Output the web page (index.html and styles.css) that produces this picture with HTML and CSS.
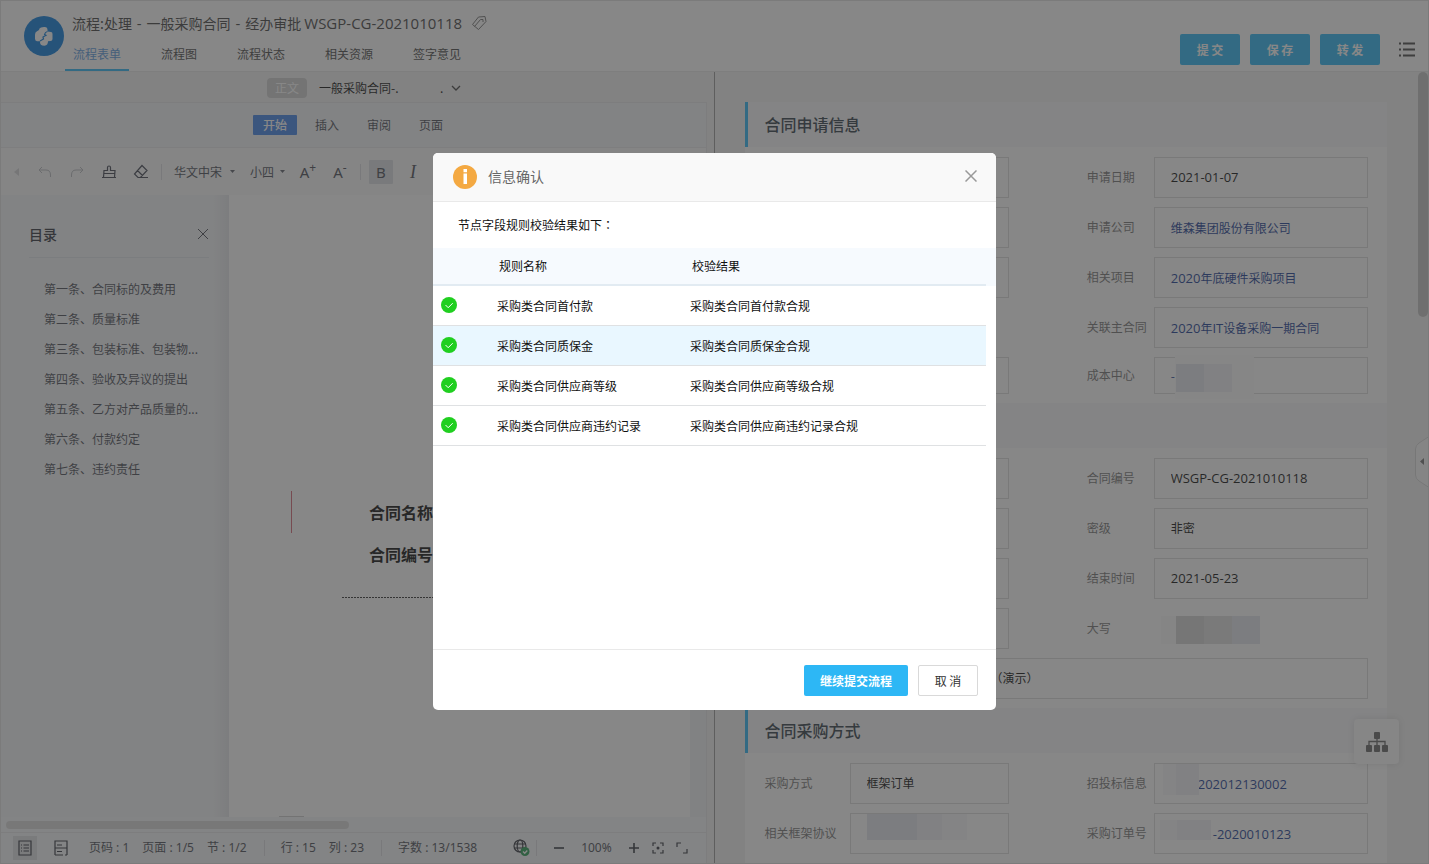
FILE: index.html
```html
<!DOCTYPE html>
<html lang="zh-CN">
<head>
<meta charset="utf-8">
<title>流程:处理</title>
<link rel="stylesheet" href="styles.css">
</head>
<body>
<div class="app">
  <header class="topbar">
    <svg class="logo" viewBox="0 0 40 40"><circle cx="20" cy="20" r="20" fill="#0d7ddd"/><path fill="#fff" d="M15 14q0-2 2-2.500l3-.500q3.500-.500 3.500 3v1.500l3.500.500q1.500.200 1.500 2v5q0 2-2 2l-2.500.200q0 4-3.500 4.500-5 0-4.500-4.500h-3q-2-.200-2-2.500v-4q0-3 2-3.500z"/><path fill="none" stroke="#0d7ddd" stroke-width="1.200" d="M23.500 15.500q-2.500.500-3 3l1.500.800-3 1.700.5 2-3.500 2"/></svg>
    <div class="heading">
      <h1 class="title"><span>流程:处理<span class="title-sep"> - </span>一般采购合同<span class="title-sep"> - </span>经办审批 <span class="title-code">WSGP-CG-2021010118</span></span>
        <svg class="tag" viewBox="0 0 16 16" fill="none" stroke="#777"><path d="M1.500 9.500l6-7.500 6.500-.5 1 5-7.500 8z"/><path d="M9.500 4.500h2.500v2.500M3.500 11.500l6-7"/></svg>
      </h1>
      <nav class="tabs">
        <a class="tab tab-on" href="#">流程表单</a>
        <a class="tab" href="#">流程图</a>
        <a class="tab" href="#">流程状态</a>
        <a class="tab" href="#">相关资源</a>
        <a class="tab" href="#">签字意见</a>
      </nav>
    </div>
    <div class="actions">
      <button class="btn-top">提 交</button>
      <button class="btn-top">保 存</button>
      <button class="btn-top">转 发</button>
      <button class="btn-menu"><svg width="16" height="15" viewBox="0 0 16 15" stroke="#4a4a4a" stroke-width="2"><path d="M0 1.500h2M4 1.500h12M0 7.500h2M4 7.500h12M0 13.500h2M4 13.500h12"/></svg></button>
    </div>
  </header>

  <main class="panes">
    <section class="left">
      <div class="docbar">
        <span class="chip">正文</span>
        <span class="docname">一般采购合同-.</span>
        <span class="docdot">.</span>
        <svg width="10" height="6" viewBox="0 0 10 6" fill="none" stroke="#444" stroke-width="1.300"><path d="M1 1l4 4 4-4"/></svg>
      </div>
      <div class="editor">
        <div class="ribbon">
          <button class="rib rib-on">开始</button>
          <button class="rib">插入</button>
          <button class="rib">审阅</button>
          <button class="rib">页面</button>
        </div>
        <div class="tools">
          <svg class="back" viewBox="0 0 5 8"><path d="M5 0v8L0 4z" fill="#d5d5d8"/></svg>
          <button class="tool"><svg viewBox="0 0 16 16" fill="none" stroke="#b9bbc0"><path d="M5 3L2 6l3 3M2 6h7q4.500 0 4.500 5v2"/></svg></button>
          <button class="tool"><svg viewBox="0 0 16 16" fill="none" stroke="#b9bbc0"><path d="M11 3l3 3-3 3M14 6H7q-4.500 0-4.500 5v2"/></svg></button>
          <button class="tool"><svg viewBox="0 0 16 16" fill="none" stroke="#444854" stroke-width="1.200"><path d="M2.500 13.500L3 6.500h3.500V3.500q0-1.500 1.500-1.500t1.500 1.500v3H14l-.5 7M1 13.500h14M3 9.500h10.500"/></svg></button>
          <button class="tool"><svg viewBox="0 0 16 16" fill="none" stroke="#444854" stroke-width="1.200"><path d="M9 1.500l5 5-6.500 7H5L1.500 10zM4.500 6.500l5 5M5 13.500h10"/></svg></button>
          <i class="rule"></i>
          <label class="pick pick-font"><select aria-label="字体"><option>华文中宋</option></select><svg viewBox="0 0 5 3"><path d="M0 0h5L2.500 3z" fill="#60636c"/></svg></label>
          <label class="pick pick-size"><select aria-label="字号"><option>小四</option></select><svg viewBox="0 0 5 3"><path d="M0 0h5L2.500 3z" fill="#60636c"/></svg></label>
          <button class="tool glyph">A<sup>+</sup></button>
          <button class="tool glyph">A<sup>-</sup></button>
          <i class="rule"></i>
          <button class="tool glyph glyph-b"><span>B</span></button>
          <button class="tool glyph glyph-i">I</button>
        </div>
        <div class="work">
          <aside class="outline">
            <div class="outline-head"><h2>目录</h2><button class="plain"><svg width="12" height="12" viewBox="0 0 12 12" stroke="#4c4f58"><path d="M1 1l10 10M11 1L1 11"/></svg></button></div>
            <ol class="toc">
              <li>第一条、合同标的及费用</li>
              <li>第二条、质量标准</li>
              <li>第三条、包装标准、包装物...</li>
              <li>第四条、验收及异议的提出</li>
              <li>第五条、乙方对产品质量的...</li>
              <li>第六条、付款约定</li>
              <li>第七条、违约责任</li>
            </ol>
          </aside>
          <article class="paper">
            <div class="doclines">
              <p><span>合同名称</span></p>
              <p><span>合同编号</span></p>
            </div>
            <hr class="dots">
            <i class="pagefoot"></i>
          </article>
        </div>
        <div class="hscroll"><i></i></div>
        <footer class="status">
          <button class="view view-on"><svg viewBox="0 0 14 16" fill="none" stroke="#33363f" stroke-width="1.200"><path d="M1 1h12v14H1zM3 5h1M5.500 5H11M3 8h1M5.500 8H11M3 11h1M5.500 11H11"/></svg></button>
          <button class="view"><svg viewBox="0 0 14 16" fill="none" stroke="#33363f" stroke-width="1.200"><path d="M1 15V1h12v14M1 8h12M3 5h5M3 11.500h5M1 15h8M11 15h2"/></svg></button>
          <span class="st st-first">页码 : 1</span>
          <span class="st">页面 : 1/5</span>
          <span class="st">节 : 1/2</span>
          <i class="rule"></i>
          <span class="st">行 : 15</span>
          <span class="st">列 : 23</span>
          <i class="rule"></i>
          <span class="st st-count">字数 : 13/1538</span>
          <svg class="globe" viewBox="0 0 18 18" fill="none"><g stroke="#33363f" stroke-width="1.200"><circle cx="7" cy="7" r="6"/><ellipse cx="7" cy="7" rx="2.800" ry="6"/><path d="M1 5h12M1 9h12"/></g><circle cx="12" cy="12.500" r="4.500" fill="#2a9e55"/><path d="M10 12.500l1.700 1.700 2.600-2.800" stroke="#fff" stroke-width="1.400"/></svg>
          <i class="rule rule-tight"></i>
          <button class="zoom"><svg viewBox="0 0 12 12" stroke="#33363f" stroke-width="1.600"><path d="M1 6h10"/></svg></button>
          <span class="pct">100%</span>
          <button class="zoom"><svg viewBox="0 0 12 12" stroke="#33363f" stroke-width="1.600"><path d="M1 6h10M6 1v10"/></svg></button>
          <button class="zoom"><svg viewBox="0 0 12 12" fill="none" stroke="#33363f" stroke-width="1.200"><path d="M1 4V1h3M8 1h3v3M11 8v3H8M4 11H1V8"/><circle cx="6" cy="6" r="1.500" fill="#33363f" stroke="none"/></svg></button>
          <button class="zoom"><svg viewBox="0 0 12 12" fill="none" stroke="#33363f" stroke-width="1.200"><path d="M1 5V1h4M11 7v4H7"/></svg></button>
        </footer>
      </div>
    </section>

    <section class="right">
      <div class="form">
        <h2 class="sec">合同申请信息</h2>
        <div class="rows">
          <div class="row"><span></span><div class="box"></div><label class="lb" for="f1">申请日期</label><input class="box num" id="f1" value="2021-01-07" readonly></div>
          <div class="row"><span></span><div class="box"></div><span class="lb">申请公司</span><div class="box"><a href="#">维森集团股份有限公司</a></div></div>
          <div class="row"><span></span><div class="box"></div><span class="lb">相关项目</span><div class="box"><a href="#"><span class="num">2020</span>年底硬件采购项目</a></div></div>
          <div class="row"><span></span><span></span><span class="lb">关联主合同</span><div class="box"><a href="#"><span class="num">2020</span>年<span class="num">IT</span>设备采购一期合同</a></div></div>
          <div class="row row-short"><span></span><div class="box"></div><span class="lb">成本中心</span><div class="box"><a href="#">-</a><span class="veil veil-cost"><i class="m3"></i><i class="m2"></i></span></div></div>
        </div>
        <div class="sec"></div>
        <div class="rows">
          <div class="row"><span></span><div class="box"></div><label class="lb" for="f2">合同编号</label><input class="box num" id="f2" value="WSGP-CG-2021010118" readonly></div>
          <div class="row"><span></span><div class="box"></div><label class="lb" for="f3">密级</label><input class="box" id="f3" value="非密" readonly></div>
          <div class="row"><span></span><div class="box"></div><label class="lb" for="f4">结束时间</label><input class="box num" id="f4" value="2021-05-23" readonly></div>
          <div class="row"><span></span><div class="box"></div><span class="lb">大写</span><div class="bare"><span class="veil veil-sum"><i class="m0"></i><i class="m5"></i><i class="m4"></i><i class="m3"></i></span></div></div>
          <div class="row row-wide"><span></span><input class="box tail" aria-label="合同名称" value="（演示）" readonly></div>
        </div>
        <h2 class="sec">合同采购方式</h2>
        <div class="rows">
          <div class="row"><label class="lb" for="f5">采购方式</label><input class="box" id="f5" value="框架订单" readonly><span class="lb">招投标信息</span><div class="box after-bid"><a class="num" href="#">202012130002</a><span class="veil veil-bid"><i class="m1"></i><i class="m2"></i></span></div></div>
          <div class="row"><span class="lb">相关框架协议</span><div class="box"><span class="veil veil-frame"><i class="m3"></i><i class="m3"></i><i class="m2"></i><i class="m1"></i></span></div><span class="lb">采购订单号</span><div class="box after-po"><a class="num" href="#">-2020010123</a><span class="veil veil-po"><i class="m1"></i><i class="m2"></i><i class="m2"></i></span></div></div>
        </div>
      </div>
      <i class="vscroll"></i>
      <button class="float"><svg width="22" height="20" viewBox="0 0 22 20"><path d="M11 6v8M3 14V9.500h16V14" fill="none" stroke="#666" stroke-width="1.300"/><g fill="#666"><rect x="8" width="6" height="7" rx="1"/><rect y="13" width="6" height="7" rx="1"/><rect x="8" y="13" width="6" height="7" rx="1"/><rect x="16" y="13" width="6" height="7" rx="1"/></g></svg></button>
      <button class="drawer"><svg width="13" height="52" viewBox="0 0 13 52"><path d="M14 .500L4 7Q.500 9.500.500 13v26q0 3.500 3.500 6l10 6.500" fill="#fafafa" stroke="#d8d8d8"/><path d="M9 22v7l-4-3.500z" fill="#777"/></svg></button>
    </section>
  </main>
</div>

<div class="mask">
  <div class="modal" role="dialog">
    <div class="m-head">
      <svg width="24" height="24" viewBox="0 0 24 24"><circle cx="12" cy="12" r="12" fill="#f4a942"/><path d="M10.500 4h3.500v3.200h-3.500zM10.500 8.500h3.500v10.500h-3.500z" fill="#fff"/></svg>
      <h2>信息确认</h2>
      <button class="plain"><svg width="12" height="12" viewBox="0 0 12 12" stroke="#999" stroke-width="1.500"><path d="M.500.500l11 11M11.500.500l-11 11"/></svg></button>
    </div>
    <div class="m-body">
      <p class="intro">节点字段规则校验结果如下<span lang="zh-TW" class="colon">：</span></p>
      <div class="tablewrap">
        <table class="rules">
          <thead><tr><th class="c-ico"></th><th class="c-name">规则名称</th><th>校验结果</th></tr></thead>
          <tbody>
            <tr><td><svg class="ok" viewBox="0 0 16 16"><circle cx="8" cy="8" r="8" fill="#20cf20"/><path d="M4.500 8l2.700 2.700 4.500-4.500" fill="none" stroke="#fff"/></svg></td><td>采购类合同首付款</td><td>采购类合同首付款合规</td></tr>
            <tr class="hot"><td><svg class="ok" viewBox="0 0 16 16"><circle cx="8" cy="8" r="8" fill="#20cf20"/><path d="M4.500 8l2.700 2.700 4.500-4.500" fill="none" stroke="#fff"/></svg></td><td>采购类合同质保金</td><td>采购类合同质保金合规</td></tr>
            <tr><td><svg class="ok" viewBox="0 0 16 16"><circle cx="8" cy="8" r="8" fill="#20cf20"/><path d="M4.500 8l2.700 2.700 4.500-4.500" fill="none" stroke="#fff"/></svg></td><td>采购类合同供应商等级</td><td>采购类合同供应商等级合规</td></tr>
            <tr><td><svg class="ok" viewBox="0 0 16 16"><circle cx="8" cy="8" r="8" fill="#20cf20"/><path d="M4.500 8l2.700 2.700 4.500-4.500" fill="none" stroke="#fff"/></svg></td><td>采购类合同供应商违约记录</td><td>采购类合同供应商违约记录合规</td></tr>
          </tbody>
        </table>
      </div>
    </div>
    <div class="m-foot">
      <button class="go">继续提交流程</button>
      <button class="cancel">取 消</button>
    </div>
  </div>
</div>
</body>
</html>
```

FILE: styles.css
```css
* { box-sizing: border-box; margin: 0; padding: 0; }
body { font: 12px/18px "Noto Sans CJK SC", "Noto Sans", sans-serif; color: #111; }
button, input, select { font: inherit; color: inherit; background: none; border: 0; appearance: none; outline: none; }
button { cursor: pointer; }
a { text-decoration: none; color: inherit; }
svg { display: block; flex: none; }
i { display: block; flex: none; }
.plain { display: flex; }
.num { font-family: "Open Sans", "Noto Sans CJK SC", sans-serif; font-size: 13px; }

.app { height: 100vh; display: flex; flex-direction: column; overflow: hidden; border: 1px solid #e2e2e2; background: #f3f3f3; }

/* top bar */
.topbar { flex: none; display: flex; height: 71px; padding-left: 23px; background: #fff; border-bottom: 1px solid #e9e9e9; }
.logo { width: 40px; height: 40px; margin-top: 15px; }
.heading { display: flex; flex-direction: column; justify-content: space-between; padding-top: 12px; }
.title { display: flex; align-items: center; gap: 9px; margin-left: 8px; font-size: 14px; line-height: 20px; font-weight: 400; color: #444; }
.title-code, .title-sep { font-family: "Open Sans", sans-serif; font-size: 15px; }
.title-sep { margin: 0 1px; white-space: pre; }
.tag { width: 16px; height: 16px; }
.tabs { display: flex; gap: 24px; }
.tab { height: 28px; padding: 0 8px; line-height: 22px; color: #4a4a4a; border-bottom: 2px solid transparent; }
.tab-on { color: #5b9bdf; border-color: #2db7f5; }
.tabs { padding-left: 1px; }
.actions { margin-left: auto; padding: 0 13px 6px 0; display: flex; align-items: flex-end; gap: 10px; }
.btn-top { width: 60px; height: 31px; border-radius: 2px; background: #2db7f5; color: #fff; font-weight: 700; }
.btn-menu { display: flex; align-items: center; height: 31px; margin-left: 9px; }

.panes { flex: 1; min-height: 0; display: grid; grid-template: minmax(0, 1fr) / minmax(0, 1fr) minmax(0, 1fr); }

/* document editor */
.left { display: flex; flex-direction: column; padding-right: 7px; border-right: 1px solid #999; }
.docbar { flex: none; height: 30px; display: flex; align-items: center; padding: 2px 0 0 266px; }
.chip { padding: 0 8px; line-height: 20px; background: #cfcfcf; color: #fff; border-radius: 4px; margin-right: 12px; }
.docname { width: 121px; }
.docdot { width: 11px; }
.editor { flex: 1; min-height: 0; display: flex; flex-direction: column; border: 1px solid #e6e6e8; border-width: 1px 1px 0 0; background: #f5f7f9; color: #4c4f58; }
.ribbon { flex: none; height: 45px; display: flex; align-items: center; gap: 8px; padding-left: 252px; border-bottom: 1px solid #e8e9eb; background: #f3f5f7; }
.rib { width: 44px; height: 20px; line-height: 18px; }
.rib-on { background: #4285e8; color: #fff; border-radius: 1px; font-weight: 500; }
.tools { flex: none; height: 47px; display: flex; align-items: center; background: #f9fafb; }
.back { width: 5px; height: 8px; margin: 0 10px 0 13px; }
.tool { flex: none; width: 32px; height: 24px; display: flex; align-items: center; justify-content: center; }
.tool svg { width: 16px; height: 16px; }
.rule { width: 1px; height: 16px; background: #dcdde0; margin: 0 4px; }
.pick { display: flex; align-items: center; }
.pick svg { width: 5px; height: 3px; }
.pick-font { margin-left: 8px; }
.pick-font select { width: 56px; }
.pick-size { margin: 0 7px 0 15px; }
.pick-size select { width: 30px; }
.glyph { font-size: 15px; font-family: "Noto Sans", sans-serif; }
.glyph sup { font-size: 12px; line-height: 16px; align-self: flex-start; }
.glyph-b span { width: 24px; height: 24px; line-height: 24px; background: #dcdfe3; border-radius: 1px; }
.glyph-i { font-family: "Liberation Serif", serif; font-style: italic; font-size: 18px; }
.work { flex: 1; min-height: 0; display: flex; padding-right: 16px; background: #f1f3f6; }
.outline { flex: none; width: 228px; padding: 27px 20px 0 28px; background: linear-gradient(to right, #f3f5f7 212px, #e4e6ea); }
.outline-head { display: flex; align-items: center; justify-content: space-between; height: 36px; padding-bottom: 12px; border-bottom: 1px solid #e2e5ec; }
.outline-head h2 { font-size: 14px; font-weight: 500; color: #33363f; }
.toc { list-style: none; padding: 16px 0 0 15px; line-height: 30px; white-space: nowrap; }
.paper { flex: 1; min-width: 0; position: relative; background: #fff; padding: 296px 0 0 62px; }
.doclines { border-left: 1px solid #d86a78; height: 42px; padding-left: 77px; color: #111; }
.doclines p { font-size: 16px; line-height: 42px; font-weight: 700; }
.doclines span { border-right: 2px solid #c9d6ee; }
.dots { border: 0; height: 1px; background: repeating-linear-gradient(to right, #333 0 2px, #fff 2px 3px); margin: 64px 60px 0 51px; }
.pagefoot { position: absolute; left: 50px; bottom: 0; width: 25px; height: 1px; background: #ccc; }
.hscroll { flex: none; height: 15px; padding: 4px 0 0 5px; }
.hscroll i { width: 49%; height: 8px; border-radius: 4px; background: #dadada; }
.status { flex: none; height: 31px; display: flex; align-items: center; padding-left: 12px; border-top: 1px solid #e6e6e8; font-family: "Noto Sans", "Noto Sans CJK SC", sans-serif; white-space: nowrap; }
.status > * { flex: none; }
.view { width: 24px; height: 24px; display: flex; align-items: center; justify-content: center; margin-right: 12px; }
.view svg { width: 14px; height: 16px; }
.view-on { background: #dfe1e4; }
.st { margin-right: 13px; }
.st-first { margin-left: 4px; }
.status .rule { margin: 0 16px 0 4px; }
.status .st-count { margin-right: 36px; }
.globe { width: 18px; height: 18px; }
.status .rule-tight { margin: 0 16px 0 5px; }
.zoom { width: 12px; height: 12px; margin-right: 12px; }
.zoom svg { width: 12px; height: 12px; }
.pct { margin: 0 16px 0 4px; }

/* contract form */
.right { position: relative; overflow: hidden; padding: 30px 41px 0 30px; }
.form { min-height: 100%; background: #fff; }
.sec { height: 45px; line-height: 45px; padding-left: 17px; border-left: 3px solid #2db7f5; background: #f8f8fb; font-size: 16px; font-weight: 500; color: #333f4a; }
.rows { display: flex; flex-direction: column; gap: 9px; padding: 10px 19px 9px 20px; }
.row { display: grid; grid-template-columns: 85px minmax(0, 159fr) 78px 67px minmax(0, 214fr); height: 41px; }
.row > :nth-child(3) { grid-column: 4; }
.row > :nth-child(4) { grid-column: 5; }
.row-short { height: 37px; }
.row-wide { grid-template-columns: 85px minmax(0, 1fr); }
.lb { align-self: center; padding-bottom: 2px; color: #777; white-space: nowrap; }
.box { position: relative; width: 100%; min-width: 0; border: 1px solid #dcdcdc; padding: 0 16px; display: flex; align-items: center; white-space: nowrap; }
input.box { padding-bottom: 2px; }
.box a { color: #1c3f96; }
.bare { position: relative; }
.row .tail { padding-left: 140px; }
.row .after-bid { padding-left: 43px; }
.row .after-po { padding-left: 58px; }
.veil { position: absolute; display: flex; background: #fdfdfd; }
.veil i { width: 28px; height: 100%; }
.veil-cost { left: 20px; top: -3px; width: 79px; height: 44px; padding: 9px 1px 7px; }
.veil-sum { left: 7px; top: 8px; height: 28px; }
.veil-sum .m0 { width: 15px; }
.veil-bid { left: 8px; top: 0; height: 31px; }
.veil-bid .m1 { width: 13px; }
.veil-bid .m2 { width: 23px; }
.veil-po { left: 5px; top: 6px; height: 20px; }
.veil-po i { width: 17px; }
.veil-frame { left: 16px; top: 0; height: 26px; }
.veil-frame i { width: 25px; }
.m0 { background: #fafafa; }
.m1 { background: #f7f8fb; }
.m2 { background: #eff1f5; }
.m3 { background: #e4e7ee; }
.m4 { background: #dedede; }
.m5 { background: #d4d4d4; }
.vscroll { position: absolute; right: 0; top: 0; width: 10px; height: 245px; border-radius: 5px; background: #c4c4c4; }
.float { position: absolute; right: 29px; bottom: 99px; width: 45px; height: 45px; border-radius: 4px; background: #fcfcfc; box-shadow: 0 0 8px rgba(0,0,0,.12); display: flex; align-items: center; justify-content: center; }
.drawer { position: absolute; right: 0; bottom: 375px; }

/* dialog */
.mask { position: fixed; inset: 0; display: flex; align-items: center; justify-content: center; padding-bottom: 1px; background: rgba(55,55,55,.6); }
.modal { width: 563px; border-radius: 5px; background: #fff; overflow: hidden; }
.m-head { display: flex; align-items: center; height: 49px; padding: 0 19px 0 20px; background: #f9f9f9; border-bottom: 1px solid #e9e9e9; }
.m-head h2 { flex: 1; margin-left: 11px; font-size: 14px; font-weight: 400; color: #666; }
.m-head .plain, .m-head h2 { padding-bottom: 2px; }
.m-body { min-height: 447px; }
.intro { height: 46px; line-height: 46px; padding-left: 25px; }
.colon { font-family: "Noto Sans CJK TC", sans-serif; }
.tablewrap { padding-right: 10px; background: linear-gradient(#f6fafe 38px, #fff 38px); }
.rules { width: 100%; border-collapse: separate; border-spacing: 0; table-layout: fixed; }
.rules th { height: 38px; padding: 0 10px; text-align: left; font-weight: 400; border-bottom: 2px solid #e2ebf2; }
.rules td { height: 40px; padding: 0 8px; border-bottom: 1px solid #dfe1e3; }
.rules .c-ico { width: 56px; }
.rules .c-name { width: 193px; }
.hot td { background: #e9f7ff; }
.ok { width: 16px; height: 16px; margin-bottom: 2px; }
.m-foot { display: flex; justify-content: flex-end; gap: 10px; padding: 15px 18px 14px; border-top: 1px solid #e9e9e9; }
.m-foot button { height: 31px; border-radius: 2px; }
.go { padding: 0 16px; background: #2db7f5; color: #fff; font-weight: 700; }
.cancel { width: 60px; border: 1px solid #d9d9d9; color: #333; }
```
